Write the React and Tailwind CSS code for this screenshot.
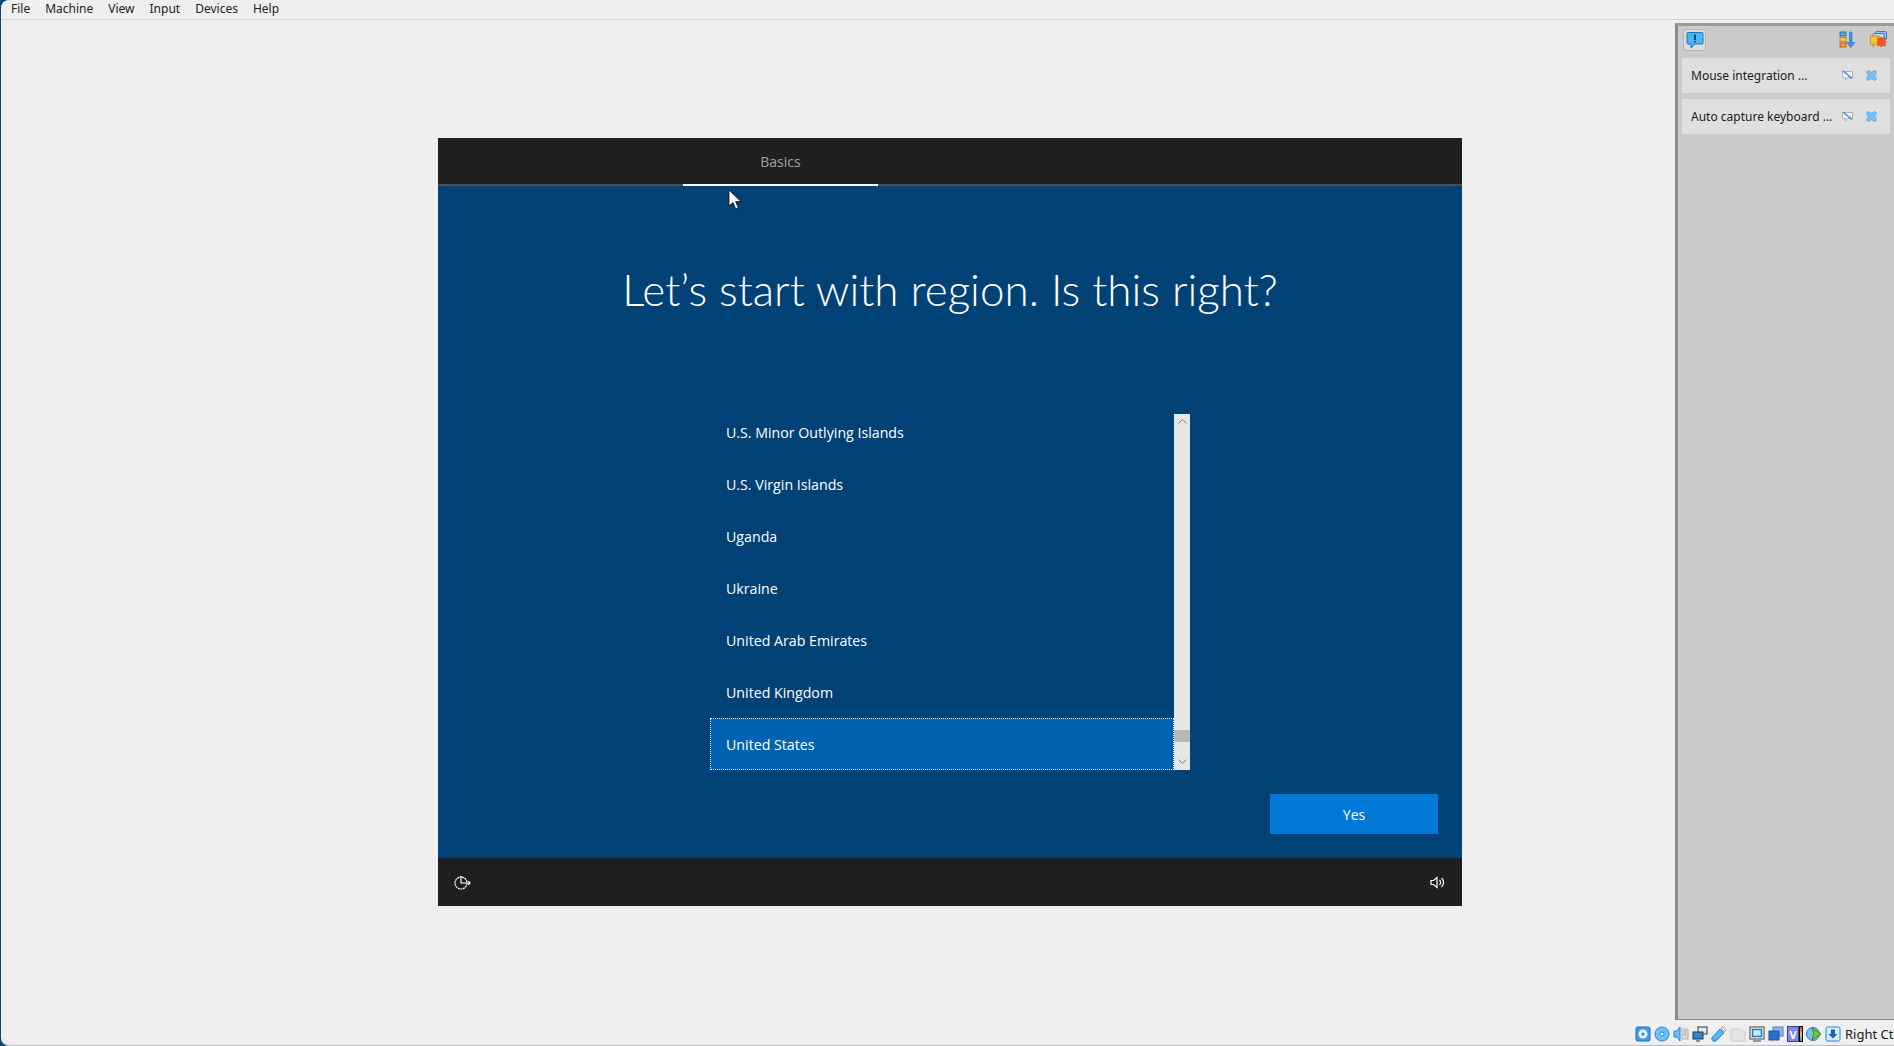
import React from 'react';

const menus = ['File', 'Machine', 'View', 'Input', 'Devices', 'Help'];
const countries = ['U.S. Minor Outlying Islands', 'U.S. Virgin Islands', 'Uganda', 'Ukraine', 'United Arab Emirates', 'United Kingdom'];

function CursorIcon() {
  return (
    <svg width="16" height="22" viewBox="0 0 16 22" className="absolute left-[728px] top-[189px]">
      <path d="M1 1v16l4-3.5 2.8 6.5 2.6-1.1-2.8-6.3h5.4z" fill="#000" opacity="0.35" transform="translate(1 1)" />
      <path d="M1 1v16l4-3.5 2.8 6.5 2.6-1.1-2.8-6.3h5.4z" fill="#fff" stroke="#111" strokeWidth="0.8" />
    </svg>
  );
}

function BubbleIcon() {
  return (
    <svg width="18" height="18" viewBox="0 0 18 18">
      <path d="M2 1.500h14a1 1 0 0 1 1 1v9.500a1 1 0 0 1-1 1H9l-4 4v-4H2a1 1 0 0 1-1-1V2.500a1 1 0 0 1 1-1z" fill="#4cb6f2" stroke="#1a78c8" strokeWidth="1" />
      <rect x="8.400" y="3.500" width="1.300" height="5.500" fill="#111" />
      <rect x="8.400" y="10" width="1.300" height="1.400" fill="#111" />
    </svg>
  );
}

function SortIcon() {
  return (
    <svg width="17" height="17" viewBox="0 0 17 17">
      <rect x="1" y="1" width="6" height="4" fill="#5aa7e8" stroke="#1f6fc0" />
      <rect x="1" y="6.500" width="6" height="4" fill="#f5c542" stroke="#c98a10" />
      <rect x="1" y="12" width="6" height="4" fill="#f39a3c" stroke="#c4650f" />
      <path d="M10.500 1h2.500v10.500h3l-4.200 5-4.300-5h3z" fill="#3b97e6" stroke="#1f6fc0" strokeWidth="0.6" />
    </svg>
  );
}

function CloseAllIcon() {
  return (
    <svg width="17" height="17" viewBox="0 0 17 17">
      <rect x="5.500" y="0.500" width="11" height="8" rx="1" fill="#8cc4f2" stroke="#2b7fd0" />
      <rect x="3" y="2.500" width="11" height="8" rx="1" fill="#b9dcf7" stroke="#2b7fd0" />
      <path d="M0.500 5h9v8h-4l-2.500 3v-3h-2.500z" fill="#f7c23a" stroke="#cf8a10" strokeWidth="0.8" />
      <path d="M7 6.500l2 1.500 2-2 2 1.500 2.500-.5-.5 2.500 1.500 1.500-1.500 1.500.5 2.500-2.500-.5-2 1.500-1.500-1.500-2 .5.500-2.500-1-1.500 1-1.500z" fill="#ee5b28" stroke="#b93a10" strokeWidth="0.5" />
    </svg>
  );
}

function HideIcon() {
  return (
    <svg width="11" height="11" viewBox="0 0 11 11">
      <path d="M0.500 1.500h10v6h-5l-2 2.500v-2.500h-3z" fill="#f4f4f4" stroke="#9aa5ad" strokeWidth="0.8" />
      <path d="M1 1l9 7.500" stroke="#2f8fe0" strokeWidth="1.500" />
    </svg>
  );
}

function XIcon() {
  return (
    <svg width="11" height="11" viewBox="0 0 11 11">
      <path d="M2 0.500l3.500 1.800 3.500-1.800 1.500 1.500-1.800 3.500 1.800 3.500-1.500 1.500-3.500-1.800-3.500 1.800-1.500-1.500 1.800-3.500-1.800-3.500z" fill="#7cc0f4" stroke="#3a94e0" strokeWidth="0.6" />
    </svg>
  );
}

function NoticeCard({ text }) {
  return (
    <div className="flex h-[35px] items-center bg-[#dfdfdf] pl-[9px]">
      <span className="w-[151px] whitespace-nowrap text-[12px] text-[#1b1b1b]">{text}</span>
      <span className="flex gap-[13px]">
        <HideIcon />
        <XIcon />
      </span>
    </div>
  );
}

function StatusIcon({ children }) {
  return (
    <svg width="16" height="16" viewBox="0 0 16 16" className="shrink-0">
      {children}
    </svg>
  );
}

function StatusIcons() {
  return (
    <div className="flex items-center gap-[3px]">
      <StatusIcon>
        <rect x="1" y="1" width="14" height="14" rx="1.500" fill="#3f9ce8" stroke="#1e6fc0" />
        <circle cx="8" cy="8" r="4.500" fill="#dff0fb" />
        <circle cx="8" cy="8" r="1.500" fill="#2b7fd0" />
      </StatusIcon>
      <StatusIcon>
        <circle cx="8" cy="8" r="7" fill="#6cc0f2" stroke="#2b84d4" />
        <circle cx="8" cy="8" r="2" fill="#eaf6fd" stroke="#2b84d4" />
      </StatusIcon>
      <StatusIcon>
        <path d="M1 5h3l3-4v14l-3-4H1z" fill="#6cc0f2" stroke="#2b84d4" />
        <rect x="9" y="3" width="6" height="10" fill="#dcdcdc" stroke="#b5b5b5" />
        <path d="M10.500 5h3M10.500 7h3M10.500 9h3" stroke="#aaa" />
      </StatusIcon>
      <StatusIcon>
        <rect x="6" y="1" width="9" height="7" fill="#d9ecfa" stroke="#333" />
        <rect x="1" y="6" width="10" height="7" fill="#2f86d8" stroke="#333" />
        <path d="M4 15h4" stroke="#333" />
      </StatusIcon>
      <StatusIcon>
        <path d="M1.500 11L9 3l4 4-7.500 7.500a2.500 2.500 0 0 1-4-3.500z" fill="#5db4f0" stroke="#2b84d4" />
        <path d="M10 2l2-1.500 3 3L13.500 6z" fill="#f0f0f0" stroke="#9a9a9a" />
      </StatusIcon>
      <StatusIcon>
        <path d="M1 3h9l2 2h3v10H1z" fill="#e4e4e4" stroke="#cfcfcf" />
      </StatusIcon>
      <StatusIcon>
        <rect x="1" y="1" width="14" height="12" fill="#f6f6f6" stroke="#444" />
        <rect x="3.500" y="3.500" width="9" height="7" fill="#cfe6f8" stroke="#1e78d0" strokeWidth="1.500" />
        <path d="M4 15h8" stroke="#444" />
      </StatusIcon>
      <StatusIcon>
        <rect x="5" y="1" width="10" height="9" fill="#8ab8ec" stroke="#4a80c8" />
        <rect x="1" y="5" width="10" height="9" fill="#2f6fc8" stroke="#1f4f9a" />
      </StatusIcon>
      <div className="flex shrink-0">
        <div className="flex h-[16px] w-[12px] items-center justify-center border border-[#3a3fa8] bg-[#7c8ce0] text-[11px] font-bold leading-none text-white">V</div>
        <div className="h-[16px] w-[4px] border border-black bg-gradient-to-b from-[#e03020] via-[#e8d020] to-[#20b030]" />
      </div>
      <StatusIcon>
        <circle cx="7" cy="8" r="6.500" fill="#7fbdf0" stroke="#2b74c4" />
        <path d="M6 2l9 6-9 6 2-6z" fill="#7cc832" stroke="#3f8a14" />
      </StatusIcon>
      <StatusIcon>
        <rect x="1" y="1" width="14" height="14" rx="1.500" fill="#d7ecfb" stroke="#2b84d4" />
        <path d="M6 3.500h4V8h2.500L8 12.500 3.500 8H6z" fill="#1560b8" />
      </StatusIcon>
      <span className="ml-[1px] whitespace-nowrap text-[13px] leading-none text-[#1b1b1b]">Right Ctrl</span>
    </div>
  );
}

function VmScreen() {
  return (
    <div className="flex h-[768px] w-[1024px] flex-col bg-[#004275] font-['Open_Sans',sans-serif] text-white">
      <div className="flex h-[48px] shrink-0 border-b-2 border-[#4f4f4f] bg-[#1f1f1f]">
        <div className="ml-[245px] flex h-[48px] w-[195px] items-center justify-center border-b-2 border-white pt-[1px] text-[14px] text-[#a2a2a2]">
          Basics
        </div>
      </div>
      <div className="flex min-h-0 flex-1 flex-col">
        <h1 className="mt-[73px] text-center font-['Lato',sans-serif] text-[44px] font-light leading-[60px]">Let’s start with region. Is this right?</h1>
        <div className="ml-[272px] mt-[95px] flex h-[356px] w-[480px]">
          {/* list is scrolled to the end, so the first row is cut at the top */}
          <ul className="flex w-[464px] flex-col justify-end overflow-hidden">
            {countries.map(c => (
              <li key={c} className="flex h-[52px] shrink-0 items-center pl-[16px] pt-[1px] text-[14.2px]">{c}</li>
            ))}
            <li className="flex h-[52px] shrink-0 items-center border border-dotted border-white bg-[#0063b1] pl-[15px] pt-[1px] text-[14.2px]">United States</li>
          </ul>
          <div className="flex w-[16px] flex-col items-center justify-between bg-[#e6e6e6] pt-[5px]">
            <svg width="9" height="5" viewBox="0 0 9 5"><path d="M0.500 4.500l4-4 4 4" fill="none" stroke="#808080" /></svg>
            <div className="flex w-full flex-col items-center">
              <div className="h-[12px] w-full bg-[#b8b8b8]" />
              <svg width="9" height="5" viewBox="0 0 9 5" className="mb-[6px] mt-[17px]"><path d="M0.500 0.500l4 4 4-4" fill="none" stroke="#808080" /></svg>
            </div>
          </div>
        </div>
        <div className="mr-[24px] mt-[24px] flex justify-end">
          <button className="h-[40px] w-[168px] bg-[#0078d7] text-[14px] text-white">Yes</button>
        </div>
      </div>
      <div className="flex h-[48px] shrink-0 items-center justify-between bg-[#1f1f1f] pl-[16px] pr-[17px]">
        <svg width="17" height="17" viewBox="0 0 17 17" fill="none" stroke="#fff" strokeWidth="1.200">
          <circle cx="7" cy="9" r="6" strokeDasharray="2 0.600" />
          <path d="M7 2v7h9" />
          <path d="M14.200 7.200l1.800 1.800-1.800 1.800" />
        </svg>
        <svg width="15" height="13" viewBox="0 0 15 13" fill="none" stroke="#fff" strokeWidth="1.200">
          <path d="M1 4.500h2.500L7 1.500v10l-3.500-3H1z" />
          <path d="M9.500 4a3.500 3.500 0 0 1 0 5" />
          <path d="M11.500 2a6 6 0 0 1 0 9" />
        </svg>
      </div>
    </div>
  );
}

export default function App() {
  return (
    <div className="relative h-screen w-full overflow-hidden bg-[#0b4a72]">
      <div className="ml-[1px] flex h-full flex-col overflow-hidden rounded-l-[8px] border-b border-[#bdbdbd] bg-[#efefef] font-['Noto_Sans',sans-serif]">
        {/* Menu bar */}
        <div className="flex h-[20px] shrink-0 items-center gap-[15px] border-b border-[#d6d6d6] pb-[1px] pl-[10px] text-[12px] leading-none text-[#222]">
          {menus.map(m => <span key={m}>{m}</span>)}
        </div>

        <div className="flex min-h-0 flex-1">
          <div className="min-w-0 flex-1 pl-[437px] pt-[118px]">
            <VmScreen />
          </div>

          {/* Notification centre */}
          <div className="mb-[1px] mt-[3px] flex w-[219px] shrink-0 flex-col gap-[6px] border-b border-l-[3px] border-t-[3px] border-b-[#8a8a8a] border-l-[#8a8a8a] border-t-[#9a9a9a] bg-[#cbcbcb] pl-[4px] pr-[4px]">
            <div className="flex h-[26px] items-end justify-between pb-[1px]">
              <div className="ml-[1px] flex h-[22px] w-[23px] items-center justify-center rounded-[3px] border border-[#b5b5b5] bg-[#dcdcdc]">
                <BubbleIcon />
              </div>
              <div className="flex gap-[14px] pb-[3px] pr-[3px]">
                <SortIcon />
                <CloseAllIcon />
              </div>
            </div>
            <NoticeCard text="Mouse integration ..." />
            <NoticeCard text="Auto capture keyboard ..." />
          </div>
        </div>

        {/* Status bar */}
        <div className="flex h-[24px] shrink-0 items-center pl-[1634px] pt-[2px]">
          <StatusIcons />
        </div>
      </div>

      <CursorIcon />
    </div>
  );
}
